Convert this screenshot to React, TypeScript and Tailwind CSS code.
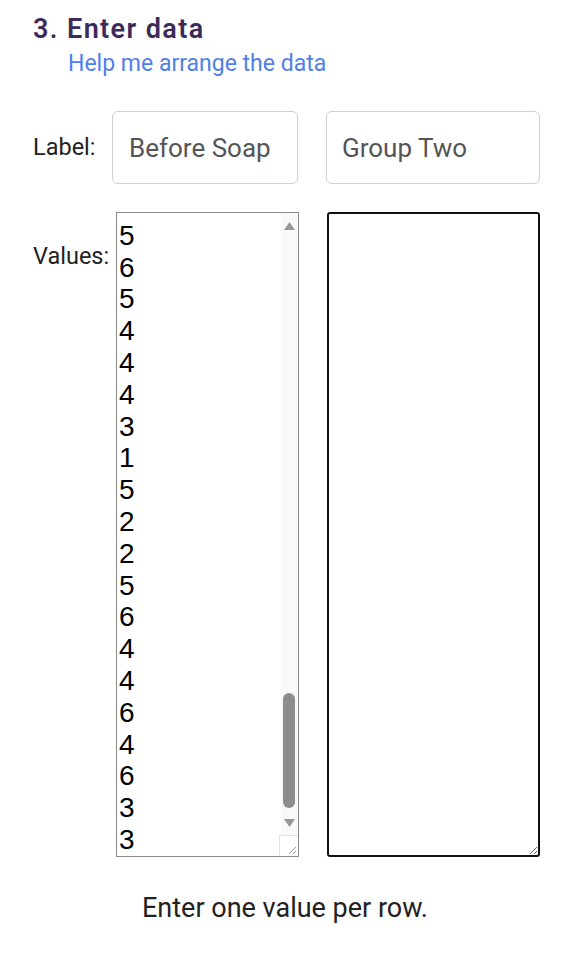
import React, { useEffect, useRef } from "react";

const tail = [5, 6, 5, 4, 4, 4, 3, 1, 5, 2, 2, 5, 6, 4, 4, 6, 4, 6, 3, 3];
const head = [
  4, 5, 3, 6, 5, 4, 2, 5, 6, 4, 3, 5, 4, 6, 5, 3, 4, 2, 5, 4,
  6, 5, 3, 4, 5, 6, 4, 3, 5, 2, 4, 6, 5, 4, 3, 5, 6, 4, 5, 3,
  4, 5, 6, 3, 4, 5, 2, 6, 4, 5, 3, 4, 6, 5, 4, 3, 5, 4, 6, 5,
  4, 3, 5, 6, 4, 5, 3, 4, 5, 6, 4, 5, 3, 4, 5, 6, 4, 5, 3, 1,
];
const values = [...head, ...tail].join("\n");

export default function App() {
  const ref = useRef<HTMLTextAreaElement>(null);
  useEffect(() => {
    if (ref.current) ref.current.scrollTop = ref.current.scrollHeight;
  }, []);

  return (
    <div
      className="w-[570px] h-[964px] bg-white"
      style={{ fontFamily: "Roboto, 'Noto Sans', sans-serif" }}
    >
      <div className="pl-[33px] pt-[12px]">
        <h2 className="text-[27px] leading-[34px] font-semibold tracking-[1.4px] text-[#3d2b5b]">
          3. Enter data
        </h2>
        <a className="block ml-[35px] mt-[5px] text-[23px] leading-[26px] text-[#4f80ea]">
          Help me arrange the data
        </a>
      </div>

      <div className="flex items-center pl-[33px] mt-[34px]">
        <span className="w-[79px] text-[23.5px] text-[#222]">Label:</span>
        <input
          readOnly
          value="Before Soap"
          className="w-[186px] h-[73px] border border-[#cfcfcf] rounded-[6px] px-[16px] text-[26px] text-[#555] outline-none"
        />
        <input
          readOnly
          placeholder="Group Two"
          className="ml-[28px] w-[214px] h-[73px] border border-[#cfcfcf] rounded-[6px] px-[15px] text-[26px] text-[#555] placeholder:text-[#555] outline-none"
        />
      </div>

      <div className="flex items-start pl-[33px] mt-[28px]">
        <span className="w-[83px] pt-[27px] text-[23.5px] text-[#222]">Values:</span>
        <div className="relative w-[183px] h-[645px]">
          <textarea
            ref={ref}
            readOnly
            value={values}
            className="block w-full h-full resize-none border border-[#8a8a8a] p-[2px] pb-0 text-[28px] leading-[31.8px] text-black outline-none [scrollbar-width:none]"
            style={{ fontFamily: "'Liberation Sans', Arial, sans-serif" }}
          />
          <div className="absolute top-[1px] bottom-[1px] right-[1px] w-[17px] bg-[#f9f9f9]">
            <svg className="absolute top-[9px] left-[3px]" width="11" height="8" viewBox="0 0 11 8">
              <polygon points="5.5,0 11,8 0,8" fill="#979797" />
            </svg>
            <div className="absolute top-[480px] left-[2px] w-[12px] h-[115px] rounded-full bg-[#8d8d8d]" />
            <svg className="absolute top-[606px] left-[3px]" width="11" height="8" viewBox="0 0 11 8">
              <polygon points="0,0 11,0 5.5,8" fill="#979797" />
            </svg>
            <div className="absolute bottom-0 right-0 w-[19px] h-[21px] border-t border-l border-[#e2e2e2] bg-white">
              <svg className="absolute right-[1px] bottom-[1px]" width="10" height="10" viewBox="0 0 10 10">
                <line x1="9" y1="2" x2="2" y2="9" stroke="#9a9a9a" strokeWidth="1" />
                <line x1="9" y1="6" x2="6" y2="9" stroke="#9a9a9a" strokeWidth="1" />
              </svg>
            </div>
          </div>
        </div>
        <textarea
          readOnly
          className="ml-[28px] w-[213px] h-[645px] border-2 border-[#111] rounded-[3px] p-[2px] outline-none"
        />
      </div>

      <p className="mt-[31px] text-center text-[27px] text-[#222]">
        Enter one value per row.
      </p>
    </div>
  );
}
